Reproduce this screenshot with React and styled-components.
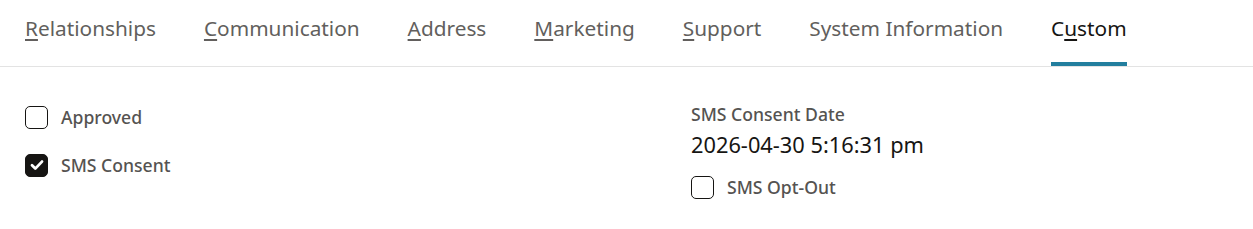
import styled, { createGlobalStyle } from "styled-components";

const GlobalStyle = createGlobalStyle`
  body {
    margin: 0;
    background: #ffffff;
    font-family: "Noto Sans", "Open Sans", sans-serif;
  }
`;

const tabs = [
  { label: "Relationships", key: "R" },
  { label: "Communication", key: "C" },
  { label: "Address", key: "A" },
  { label: "Marketing", key: "M" },
  { label: "Support", key: "S" },
  { label: "System Information", key: null },
  { label: "Custom", key: "u", active: true },
];

const renderLabel = (label, key) => {
  if (!key) return label;
  const i = label.indexOf(key);
  return (
    <>
      {label.slice(0, i)}
      <u>{label[i]}</u>
      {label.slice(i + 1)}
    </>
  );
};

const Check = ({ checked }) => (
  <Box checked={checked}>
    {checked && (
      <svg width="16" height="16" viewBox="0 0 16 16">
        <path d="M3 8.3l3.3 3.3L13 4.6" fill="none" stroke="#fff" strokeWidth="2.8" strokeLinecap="round" strokeLinejoin="round" />
      </svg>
    )}
  </Box>
);

const App = () => {
  return (
    <>
      <GlobalStyle />
      <TabBar>
        {tabs.map((t) => (
          <Tab key={t.label} active={t.active}>
            {renderLabel(t.label, t.key)}
          </Tab>
        ))}
      </TabBar>
      <Content>
        <Column>
          <CheckRow>
            <Check />
            <CheckLabel>Approved</CheckLabel>
          </CheckRow>
          <CheckRow>
            <Check checked />
            <CheckLabel>SMS Consent</CheckLabel>
          </CheckRow>
        </Column>
        <Column>
          <Field>
            <FieldLabel>SMS Consent Date</FieldLabel>
            <FieldValue>2026-04-30 5:16:31 pm</FieldValue>
          </Field>
          <CheckRow>
            <Check />
            <CheckLabel>SMS Opt-Out</CheckLabel>
          </CheckRow>
        </Column>
      </Content>
    </>
  );
};

export default App;

const TabBar = styled.div`
  display: flex;
  gap: 48px;
  padding: 0 25px;
  height: 66px;
  border-bottom: 1px solid #e3e3e3;
`;

const Tab = styled.div`
  height: 100%;
  box-sizing: border-box;
  padding-top: 13px;
  line-height: 30px;
  border-bottom: ${(p) => (p.active ? "4px solid #227e9e" : "none")};
  font-size: 20.8px;
  color: ${(p) => (p.active ? "#161513" : "#625f5d")};
  white-space: nowrap;

  u {
    text-decoration-thickness: 2px;
    text-underline-offset: 3px;
  }
`;

const Content = styled.div`
  display: grid;
  grid-template-columns: 666px 1fr;
  padding: 38px 25px 0;
`;

const Column = styled.div`
  display: flex;
  flex-direction: column;
`;

const CheckRow = styled.div`
  display: flex;
  align-items: center;
  gap: 13px;
  height: 24px;
  margin-bottom: 24px;
`;

const Box = styled.span`
  display: inline-flex;
  align-items: center;
  justify-content: center;
  width: 23px;
  height: 23px;
  box-sizing: border-box;
  border-radius: 5px;
  border: 1.5px solid #161513;
  background: ${(p) => (p.checked ? "#161513" : "#fff")};
`;

const CheckLabel = styled.span`
  font-size: 17.6px;
  font-weight: 500;
  color: #555351;
`;

const Field = styled.div`
  display: flex;
  flex-direction: column;
  margin-top: -2px;
  margin-bottom: 14px;
`;

const FieldLabel = styled.span`
  font-size: 17.6px;
  font-weight: 500;
  color: #555351;
  line-height: 22px;
`;

const FieldValue = styled.span`
  font-size: 21.8px;
  color: #161513;
  line-height: 32px;
  margin-top: 4px;
`;
